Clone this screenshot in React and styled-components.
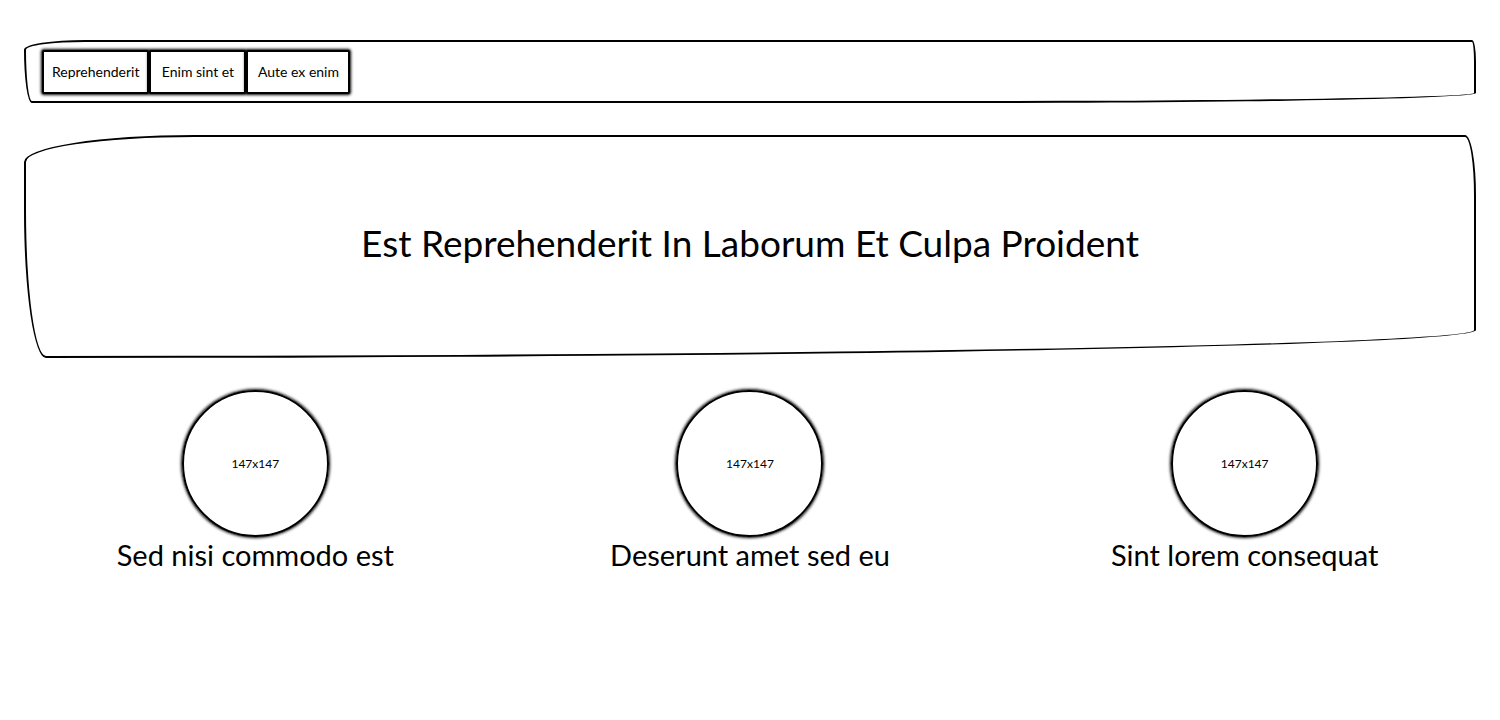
import React from "react";
import styled, { createGlobalStyle } from "styled-components";

const GlobalStyle = createGlobalStyle`
  *, *::before, *::after { box-sizing: border-box; }
  body {
    margin: 0;
    background: #fff;
    color: #000;
    font-family: Lato, "Liberation Sans", sans-serif;
    font-size: 14px;
    line-height: 24px;
  }
`;

const Page = styled.div`
  display: flex;
  flex-direction: column;
  gap: 32px;
  padding: 40px 24px;
`;

/* Oversized radii: the browser scales them down to each panel's own size. */
const sketchRadius = "340px 22px 2860px 44px / 54px 120px 56px 296px";
const inkShadow = "0 0 3px 1px #000";

const Nav = styled.nav`
  display: flex;
  padding: 8px 16px 7px;
  border: 2px solid #000;
  border-radius: ${sketchRadius};
`;

const NavButton = styled.button`
  min-width: ${({ $width }) => $width}px;
  padding: 8px;
  border: 2px solid #000;
  border-radius: 2px;
  background: #fff;
  color: inherit;
  font: inherit;
  white-space: nowrap;
  box-shadow: ${inkShadow};
  cursor: pointer;
`;

const Hero = styled.header`
  padding: 76px 16px 84px;
  border: 2px solid #000;
  border-radius: ${sketchRadius};
  text-align: center;
`;

const Title = styled.h1`
  margin: 0;
  font-size: 37px;
  line-height: 59px;
  font-weight: 400;
`;

const Features = styled.main`
  display: grid;
  grid-template-columns: repeat(3, 1fr);
  gap: 32px;
`;

const Feature = styled.section`
  display: flex;
  flex-direction: column;
  align-items: center;
`;

const Circle = styled.div`
  display: flex;
  align-items: center;
  justify-content: center;
  width: 147px;
  height: 147px;
  border: 2px solid #000;
  border-radius: 50%;
  font-size: 12px;
  box-shadow: ${inkShadow};
`;

const FeatureTitle = styled.h2`
  margin: 0;
  font-size: 29px;
  line-height: 36px;
  font-weight: 400;
  text-align: center;
`;

const links = [
  { label: "Reprehenderit", width: 107 },
  { label: "Enim sint et", width: 97 },
  { label: "Aute ex enim", width: 104 },
];
const features = ["Sed nisi commodo est", "Deserunt amet sed eu", "Sint lorem consequat"];

export default function App() {
  return (
    <Page>
      <GlobalStyle />
      <Nav>
        {links.map(({ label, width }) => (
          <NavButton key={label} type="button" $width={width}>{label}</NavButton>
        ))}
      </Nav>
      <Hero>
        <Title>Est Reprehenderit In Laborum Et Culpa Proident</Title>
      </Hero>
      <Features>
        {features.map((title) => (
          <Feature key={title}>
            <Circle>147x147</Circle>
            <FeatureTitle>{title}</FeatureTitle>
          </Feature>
        ))}
      </Features>
    </Page>
  );
}
